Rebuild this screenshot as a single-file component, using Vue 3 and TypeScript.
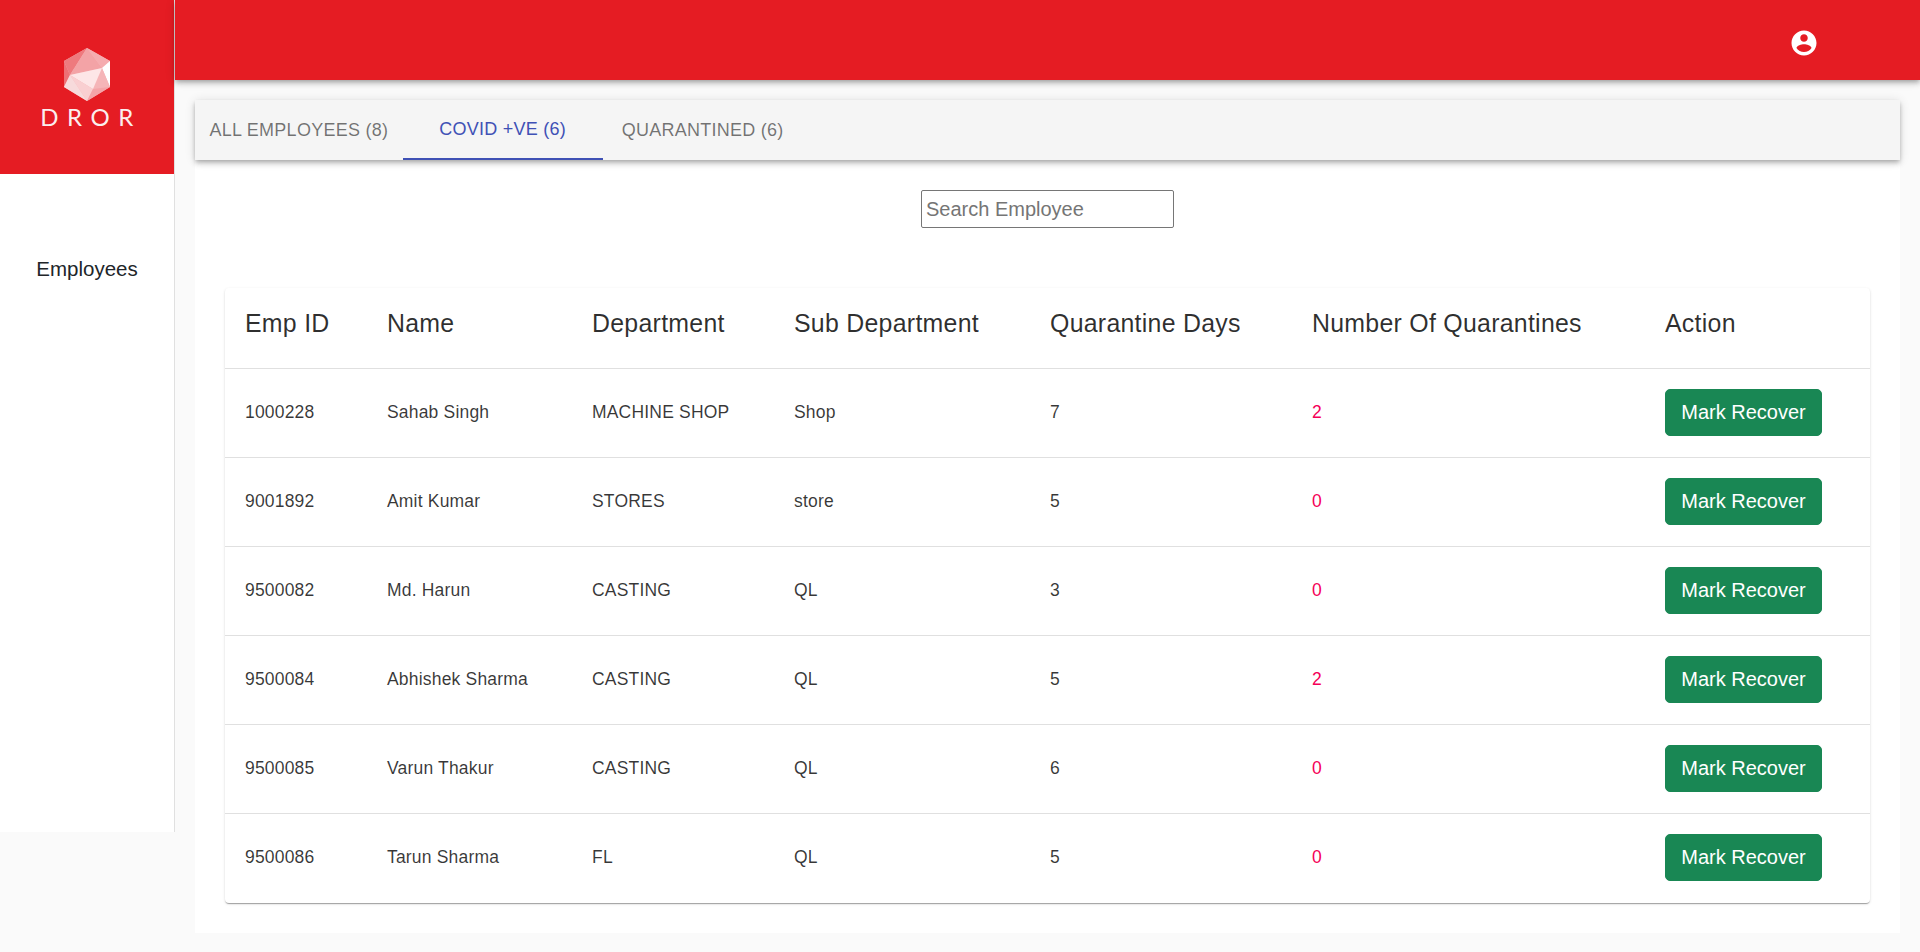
<template>
  <div class="page">
    <aside class="sidebar">
      <div class="brand">
        <svg class="gem" width="46" height="54" viewBox="0 0 46 54">
          <polygon points="23,0 46,13 46,39 23,53 0,39 0,13" fill="#f6b3b6" />
          <polygon points="23,0 0,13 6,27" fill="#ee7a7e" />
          <polygon points="0,13 6,27 0,39" fill="#ed7075" />
          <polygon points="23,0 38,20 6,27" fill="#f3a3a6" />
          <polygon points="23,0 46,13 38,20" fill="#f5acaf" />
          <polygon points="46,13 38,20 46,39" fill="#fff" />
          <polygon points="38,20 46,39 29,41" fill="#f5b5b8" />
          <polygon points="6,27 38,20 29,41" fill="#fde6e7" />
          <polygon points="6,27 29,41 23,53" fill="#f9cfd1" />
          <polygon points="0,39 6,27 23,53" fill="#f7dadb" />
          <polygon points="29,41 46,39 23,53" fill="#f4a4a8" />
        </svg>
        <div class="brand-name">DROR</div>
      </div>
      <nav class="side-nav">
        <a class="side-link">Employees</a>
      </nav>
    </aside>

    <div class="main">
      <header class="topbar">
        <svg class="user-icon" width="30" height="30" viewBox="0 0 24 24" fill="#fff">
          <path d="M12 2C6.48 2 2 6.48 2 12s4.48 10 10 10 10-4.48 10-10S17.52 2 12 2zm0 3c1.66 0 3 1.34 3 3s-1.34 3-3 3-3-1.34-3-3 1.34-3 3-3zm0 14.2c-2.5 0-4.71-1.28-6-3.22.03-1.99 4-3.08 6-3.08 1.99 0 5.97 1.09 6 3.08-1.29 1.94-3.5 3.22-6 3.22z" />
        </svg>
      </header>

      <section class="content">
        <div class="tabs">
          <div
            v-for="tab in tabs"
            :key="tab.label"
            class="tab"
            :class="{ active: tab.label === activeTab }"
            @click="activeTab = tab.label"
          >
            {{ tab.label }} ({{ tab.count }})
          </div>
        </div>

        <div class="search-row">
          <input v-model="search" class="search" type="text" placeholder="Search Employee" />
        </div>

        <div class="card">
          <table class="emp-table">
            <colgroup>
              <col v-for="w in colWidths" :key="w" :style="{ width: w + 'px' }" />
            </colgroup>
            <thead>
              <tr>
                <th v-for="h in headers" :key="h">{{ h }}</th>
              </tr>
            </thead>
            <tbody>
              <tr v-for="emp in employees" :key="emp.id">
                <td>{{ emp.id }}</td>
                <td>{{ emp.name }}</td>
                <td>{{ emp.dept }}</td>
                <td>{{ emp.sub }}</td>
                <td>{{ emp.days }}</td>
                <td class="count">{{ emp.times }}</td>
                <td><button class="recover">Mark Recover</button></td>
              </tr>
            </tbody>
          </table>
        </div>
      </section>
    </div>
  </div>
</template>

<script setup lang="ts">
import { ref } from 'vue';

const tabs = [
  { label: 'ALL EMPLOYEES', count: 8 },
  { label: 'COVID +VE', count: 6 },
  { label: 'QUARANTINED', count: 6 },
];
const activeTab = ref('COVID +VE');
const search = ref('');

const headers = ['Emp ID', 'Name', 'Department', 'Sub Department', 'Quarantine Days', 'Number Of Quarantines', 'Action'];
const colWidths = [142, 205, 202, 256, 262, 353, 225];

const employees = [
  { id: '1000228', name: 'Sahab Singh', dept: 'MACHINE SHOP', sub: 'Shop', days: 7, times: 2 },
  { id: '9001892', name: 'Amit Kumar', dept: 'STORES', sub: 'store', days: 5, times: 0 },
  { id: '9500082', name: 'Md. Harun', dept: 'CASTING', sub: 'QL', days: 3, times: 0 },
  { id: '9500084', name: 'Abhishek Sharma', dept: 'CASTING', sub: 'QL', days: 5, times: 2 },
  { id: '9500085', name: 'Varun Thakur', dept: 'CASTING', sub: 'QL', days: 6, times: 0 },
  { id: '9500086', name: 'Tarun Sharma', dept: 'FL', sub: 'QL', days: 5, times: 0 },
];
</script>

<style>
body {
  background: #fafafa;
}
</style>

<style scoped>
.page {
  display: flex;
  align-items: flex-start;
  height: 952px;
  overflow: hidden;
  font-family: "Liberation Sans", Arial, sans-serif;
  background: #fafafa;
}

.sidebar {
  width: 174px;
  height: 832px;
  flex: none;
  background: #fff;
  border-right: 1px solid #e0e0e0;
}

.brand {
  height: 174px;
  background: #e51c23;
  display: flex;
  flex-direction: column;
  align-items: center;
  padding-top: 48px;
  box-sizing: border-box;
}

.gem {
  display: block;
}

.brand-name {
  margin-top: 2px;
  margin-left: 8px;
  color: #fbeeee;
  font-family: Lato, sans-serif;
  font-weight: 400;
  font-size: 24px;
  line-height: 26px;
  letter-spacing: 8.5px;
}

.side-nav {
  padding-top: 83px;
  text-align: center;
}

.side-link {
  font-size: 20.5px;
  line-height: 24px;
  color: #212529;
}

.main {
  flex: 1;
  min-width: 0;
}

.topbar {
  height: 80px;
  background: #e51c23;
  display: flex;
  align-items: center;
  justify-content: flex-end;
  padding-right: 101px;
  padding-top: 6px;
  box-sizing: border-box;
  box-shadow: 0 2px 4px -1px rgba(0, 0, 0, 0.2), 0 4px 5px 0 rgba(0, 0, 0, 0.14), 0 1px 10px 0 rgba(0, 0, 0, 0.12);
  position: relative;
}

.content {
  margin: 20px 20px 0;
  background: #fff;
  height: 833px;
}

.tabs {
  display: flex;
  height: 60px;
  background: #f5f5f5;
  box-shadow: 0 2px 4px -1px rgba(0, 0, 0, 0.2), 0 4px 5px 0 rgba(0, 0, 0, 0.14), 0 1px 10px 0 rgba(0, 0, 0, 0.12);
}

.tab {
  box-sizing: border-box;
  height: 60px;
  min-width: 200px;
  padding: 0 14.5px;
  display: flex;
  align-items: center;
  justify-content: center;
  font-size: 18px;
  letter-spacing: 0.25px;
  color: rgba(0, 0, 0, 0.54);
  white-space: nowrap;
  cursor: pointer;
}

.tab.active {
  color: #3f51b5;
  border-bottom: 2px solid #3f51b5;
}

.search-row {
  display: flex;
  justify-content: center;
  padding-top: 30px;
}

.search {
  box-sizing: border-box;
  width: 253px;
  height: 38px;
  padding: 1px 4px;
  border: 1px solid #767676;
  border-radius: 2px;
  font-family: "Liberation Sans", Arial, sans-serif;
  font-size: 20px;
  color: #222;
}

.search::placeholder {
  color: #757575;
}

.card {
  margin: 60px 30px 0;
  background: #fff;
  border-radius: 4px;
  box-shadow: 0 2px 1px -1px rgba(0, 0, 0, 0.2), 0 1px 1px 0 rgba(0, 0, 0, 0.14), 0 1px 3px 0 rgba(0, 0, 0, 0.12);
}

.emp-table {
  width: 100%;
  table-layout: fixed;
  border-collapse: collapse;
}

th {
  height: 80px;
  padding: 0 20px 8px;
  text-align: left;
  font-size: 24.9px;
  font-weight: 400;
  letter-spacing: 0.01071em;
  color: rgba(0, 0, 0, 0.82);
  border-bottom: 1px solid #e0e0e0;
  box-sizing: border-box;
  white-space: nowrap;
}

td {
  height: 89px;
  padding: 0 20px;
  font-size: 17.5px;
  letter-spacing: 0.01071em;
  color: rgba(0, 0, 0, 0.78);
  border-bottom: 1px solid #e0e0e0;
  box-sizing: border-box;
  white-space: nowrap;
}

tbody tr:last-child td {
  height: 90px;
  padding-bottom: 1px;
  border-bottom: none;
}

td.count {
  color: #f50057;
}

.recover {
  width: 157px;
  height: 47px;
  padding: 0;
  background: #198754;
  color: #fff;
  border: 1px solid #198754;
  border-radius: 5px;
  font-family: "Liberation Sans", Arial, sans-serif;
  font-size: 20px;
  display: block;
  cursor: pointer;
}
</style>
